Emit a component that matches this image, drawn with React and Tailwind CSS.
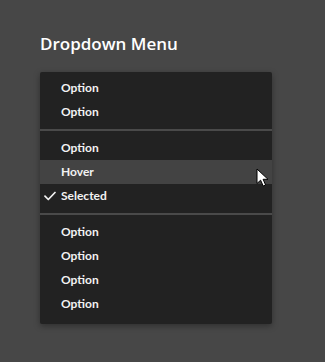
import React from "react";

const font = { fontFamily: "Lato, 'Open Sans', sans-serif" };

function Item({ label, hover, selected }) {
  return (
    <div className={`relative flex h-6 items-center pl-[21px] text-[12px] font-bold text-[#f2f2f2] ${hover ? "bg-[#434343]" : ""}`}>
      {selected && (
        <svg className="absolute left-[4px] top-[7px]" width="12" height="10" viewBox="0 0 12 10" fill="none">
          <path d="M1 5.2 L4.3 8.5 L11 1.5" stroke="#f2f2f2" strokeWidth="1.7" strokeLinecap="round" strokeLinejoin="round" />
        </svg>
      )}
      {label}
    </div>
  );
}

function Sep() {
  return <div className="my-[5px] h-[2px] bg-[#4a4a4a]" />;
}

export default function App() {
  return (
    <div className="min-h-[362px] w-[325px] bg-[#474747] pl-10 pt-[32px]" style={font}>
      <div className="mb-4 font-['Open_Sans',sans-serif] text-[17px] font-semibold leading-6 text-white">Dropdown Menu</div>
      <div className="relative w-[232px] rounded-[2px] bg-[#222222] pb-2 pt-1 shadow-[0_2px_6px_rgba(0,0,0,0.35)]">
        <Item label="Option" />
        <Item label="Option" />
        <Sep />
        <Item label="Option" />
        <Item label="Hover" hover />
        <Item label="Selected" selected />
        <Sep />
        <Item label="Option" />
        <Item label="Option" />
        <Item label="Option" />
        <Item label="Option" />
        <svg className="absolute left-[216px] top-[96px]" width="14" height="19" viewBox="0 0 14 19">
          <path d="M1 1 L1 15.5 L4.6 12.2 L7.2 18 L9.6 17 L7.1 11.3 L12 11.3 Z" fill="#ffffff" stroke="#000000" strokeWidth="1" strokeLinejoin="round" />
        </svg>
      </div>
    </div>
  );
}
